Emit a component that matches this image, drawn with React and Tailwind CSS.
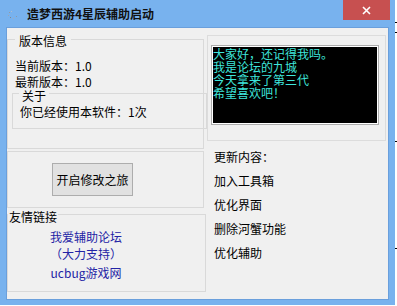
import React from 'react';

const cjk = { fontFamily: '"Noto Sans CJK SC", "Liberation Sans", sans-serif' };

// left-side group box with a caption sitting on the top border
const GroupBox = ({ label, labelClass, className, children }) => (
  <div className={`border border-[#d9d9d9] ${className}`}>
    {label && (
      <div className={`bg-[#f0f0f0] w-fit leading-[14px] h-[14px] ${labelClass}`}>{label}</div>
    )}
    {children}
  </div>
);

const App = () => {
  const consoleLines = ['大家好，还记得我吗。', '我是论坛的九城', '今天拿来了第三代', '希望喜欢吧！'];
  const updates = ['加入工具箱', '优化界面', '删除河蟹功能', '优化辅助'];

  return (
    <div className="w-[397px] h-[306px] bg-white flex text-[12px] text-black" style={cjk}>
      <div className="w-[395px] h-[305px] bg-[#78b2ee] flex flex-col">
        {/* title bar */}
        <div className="h-[27px] flex items-start">
          <svg className="ml-[8px] mt-[10px]" width="10" height="10" viewBox="0 0 10 10">
            <rect x="1" y="2" width="1" height="1" fill="#8e9aa8" />
            <rect x="3" y="1" width="1" height="1" fill="#b5bfca" />
            <rect x="0" y="5" width="1" height="1" fill="#9aa6b4" />
            <rect x="2" y="7" width="1" height="1" fill="#7d8896" />
            <rect x="5" y="8" width="1" height="1" fill="#a3adb9" />
            <rect x="8" y="6" width="1" height="1" fill="#8e9aa8" />
          </svg>
          <div className="ml-[9px] mt-[7px] font-bold leading-[14px] text-[#111]">造梦西游4星辰辅助启动</div>
          <div className="flex-1" />
          <div className="w-[47px] h-[20px] mr-[5px] bg-[#c75050] flex items-center justify-center">
            <svg width="9" height="9" viewBox="0 0 9 9">
              <path d="M1 1 L8 8 M8 1 L1 8" stroke="white" strokeWidth="1.6" />
            </svg>
          </div>
        </div>

        {/* client area */}
        <div className="mx-[6px] h-[273px] border border-[#6a9fdc] bg-[#f0f0f0] flex gap-[4px]">
          {/* left column */}
          <div className="w-[196px] flex flex-col">
            <GroupBox label="版本信息" labelClass="-mt-[6px] ml-[7px] px-[4px]" className="mt-[11px] h-[110px] w-[197px]">
              <div className="mt-[10px] pl-[7px] leading-[16px]">
                <div>当前版本：1.0</div>
                <div>最新版本：1.0</div>
              </div>
              <GroupBox label="关于" labelClass="-mt-[5px] ml-[6px] px-[3px]" className="mt-[3px] ml-[4px] w-[195px] h-[36px]">
                <div className="mt-[1px] pl-[7px] leading-[16px]">你已经使用本软件：1次</div>
              </GroupBox>
            </GroupBox>

            <GroupBox className="mt-[2px] h-[57px] w-[197px]">
              <div className="pt-[11px] pl-[44px]">
                <button className="w-[81px] h-[33px] border border-[#adadad] bg-[#e1e1e1] flex items-center justify-center leading-[14px]">
                  开启修改之旅
                </button>
              </div>
            </GroupBox>

            <GroupBox label="友情链接" labelClass="-mt-[5px] px-[1px]" className="mt-[6px] h-[78px] w-[199px]">
              <div className="ml-[28px] w-[100px] mt-[4px] flex flex-col items-center text-[#2323a5]">
                <div className="leading-[17px]">我爱辅助论坛</div>
                <div className="leading-[17px]">（大力支持）</div>
                <div className="leading-[17px] mt-[2px]">ucbug游戏网</div>
              </div>
            </GroupBox>
          </div>

          {/* right column */}
          <div className="flex-1 flex flex-col">
            <div className="mt-[7px] h-[106px] w-[179px] border border-[#dcdcdc]">
              <div className="mt-[9px] ml-[3px] w-[168px] h-[80px] border border-[#acacac]">
                <div className="w-full h-full border border-white bg-black text-[#3ee6dc] leading-[13px]">
                  {consoleLines.map((l) => (
                    <div key={l}>{l}</div>
                  ))}
                </div>
              </div>
            </div>
            <div className="mt-[4px] pl-[7px] leading-[24px]">
              <div>更新内容：</div>
              {updates.map((u) => (
                <div key={u}>{u}</div>
              ))}
            </div>
          </div>
        </div>
      </div>

      {/* strip of whatever lies behind the window */}
      <div className="flex-1 flex flex-col">
        <div className="h-[22px]" />
        <div className="h-[1px] bg-black" />
        <div className="h-[9px]" />
        <div className="h-[1px] bg-black" />
        <div className="h-[108px]" />
        <div className="h-[1px] bg-black" />
        <div className="h-[106px]" />
        <div className="h-[1px] bg-black" />
      </div>
    </div>
  );
};

export default App;
